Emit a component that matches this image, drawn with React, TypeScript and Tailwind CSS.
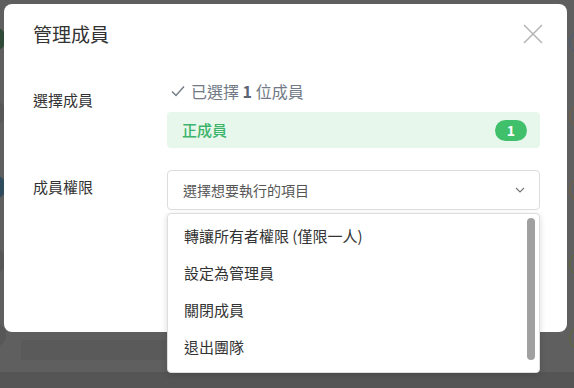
const font = { fontFamily: '"Noto Sans CJK TC", "Noto Sans", sans-serif' };

const items = ["轉讓所有者權限 (僅限一人)", "設定為管理員", "關閉成員", "退出團隊"];
const leftAvatars = ["bg-[#2f4a37]", "bg-[#575757]", "bg-[#2f4b5e]", "bg-[#575757]", "bg-[#575757]"];
const rightAvatars = ["border-[#4a5c7a]", "border-[#7a6040]", "border-[#7a6040]", "border-[#5c6a30]", "border-[#5c6a30]"];

export default function App() {
  return (
    <div className="relative w-[574px] h-[388px] overflow-hidden bg-[#5f5f5f] flex flex-col" style={font}>
      {/* page behind the overlay */}
      <div className="flex h-[372px]">
        <div className="flex flex-col gap-[50px] pt-[27px] ml-[-18px] w-[24px] shrink-0">
          {leftAvatars.map((c, i) => (
            <div key={i} className={`w-[24px] h-[24px] rounded-full shrink-0 ${c}`} />
          ))}
        </div>
        <div className="flex-1 flex flex-col justify-end pb-[12px] pl-[15px]">
          <div className="w-[144px] h-[20px] bg-[#5a5a5a]" />
        </div>
        <div className="flex flex-col gap-[50px] pt-[30px] mr-[-19px] w-[24px] shrink-0">
          {rightAvatars.map((c, i) => (
            <div key={i} className={`w-[24px] h-[24px] rounded-full border shrink-0 ${c}`} />
          ))}
        </div>
      </div>
      <div className="flex-1 bg-[#555555]" />

      {/* modal */}
      <div className="absolute left-[4px] top-[4px] w-[563px] h-[328px] rounded-lg bg-white pl-[29px] pr-[27px] pt-[14px]">
        <div className="flex items-center justify-between h-[32px]">
          <h2 className="text-[19px] font-normal text-[#333333]">管理成員</h2>
          <svg width="20" height="20" viewBox="0 0 20 20" className="mr-[-3px]">
            <path d="M1 1L19 19M19 1L1 19" stroke="#b4b4b4" strokeWidth="1.5" />
          </svg>
        </div>

        <div className="grid grid-cols-[134px_1fr] mt-[30px]">
          <div className="pt-[9px] text-[15px] leading-[22px] text-[#333333]">選擇成員</div>
          <div>
            <div className="flex items-center gap-[6px] text-[16px] leading-[22px] text-[#717a86] pl-[4px]">
              <svg width="14" height="14" viewBox="0 0 14 14">
                <path d="M1 7.5L5 11.5L13 2.5" fill="none" stroke="#717a86" strokeWidth="1.4" />
              </svg>
              <span>
                已選擇 <b className="font-bold text-[#5b6472]">1</b> 位成員
              </span>
            </div>
            <div className="mt-[10px] h-[36px] rounded bg-[#e8f7ec] flex items-center justify-between pl-[15px] pr-[13px]">
              <span className="text-[15px] font-medium text-[#3cb46b]">正成員</span>
              <span className="w-[32px] h-[21px] rounded-full bg-[#41c06c] text-white text-[14px] font-bold flex items-center justify-center">
                1
              </span>
            </div>
          </div>
        </div>

        <div className="grid grid-cols-[134px_1fr] mt-[22px]">
          <div className="pt-[6px] text-[15px] leading-[22px] text-[#333333]">成員權限</div>
          <div className="h-[40px] rounded border border-[#dddddd] flex items-center justify-between pl-[15px] pr-[14px]">
            <span className="text-[14px] text-[#555555]">選擇想要執行的項目</span>
            <svg width="10" height="6" viewBox="0 0 10 6">
              <path d="M1 1L5 5L9 1" fill="none" stroke="#777777" strokeWidth="1.2" />
            </svg>
          </div>
        </div>
      </div>

      {/* dropdown menu */}
      <div className="absolute left-[167px] top-[213px] w-[373px] h-[160px] rounded bg-white border border-[#dedede] shadow-[0_2px_6px_rgba(0,0,0,0.15)] flex">
        <ul className="flex-1 pt-[4px]">
          {items.map((t) => (
            <li key={t} className="h-[37px] flex items-center pl-[16px] text-[15px] text-[#333333]">
              {t}
            </li>
          ))}
        </ul>
        <div className="w-[8px] mt-[4px] mb-[12px] mr-[4px] rounded-full bg-[#a0a0a0]" />
      </div>
    </div>
  );
}
